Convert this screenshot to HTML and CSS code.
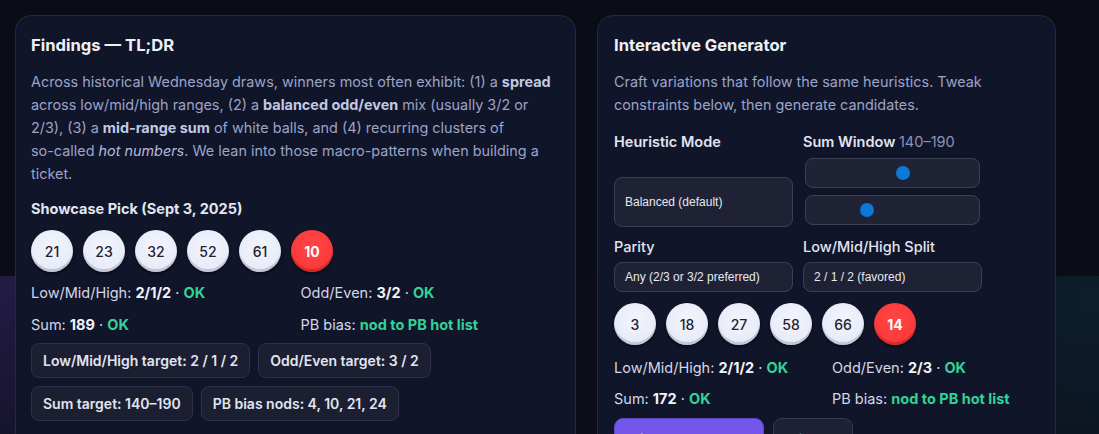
FILE: index.html
```html
<!DOCTYPE html>
<html lang="en">
<head>
<meta charset="utf-8">
<title>Findings & Generator</title>
<link rel="stylesheet" href="styles.css">
</head>
<body>
<main class="layout">
  <section class="card card-left">
    <h2 class="card-title">Findings — TL;DR</h2>
    <p class="lead">Across historical Wednesday draws, winners most often exhibit: (1) a <b>spread</b> across low/mid/high ranges, (2) a <b>balanced odd/even</b> mix (usually 3/2 or 2/3), (3) a <b>mid-range sum</b> of white balls, and (4) recurring clusters of <span class="nowrap">so-called</span> <i>hot numbers</i>. We lean into those macro-patterns when building a ticket.</p>
    <h3 class="sub">Showcase Pick (Sept 3, 2025)</h3>
    <div class="balls">
      <span class="ball">21</span>
      <span class="ball">23</span>
      <span class="ball">32</span>
      <span class="ball">52</span>
      <span class="ball">61</span>
      <span class="ball pb">10</span>
    </div>
    <div class="stats">
      <div>Low/Mid/High: <b>2/1/2</b> · <span class="ok">OK</span></div>
      <div>Odd/Even: <b>3/2</b> · <span class="ok">OK</span></div>
      <div>Sum: <b>189</b> · <span class="ok">OK</span></div>
      <div>PB bias: <span class="ok">nod to PB hot list</span></div>
    </div>
    <div class="chips">
      <span class="chip">Low/Mid/High target: 2 / 1 / 2</span>
      <span class="chip">Odd/Even target: 3 / 2</span>
      <span class="chip">Sum target: 140–190</span>
      <span class="chip">PB bias nods: 4, 10, 21, 24</span>
    </div>
  </section>

  <section class="card card-right">
    <h2 class="card-title">Interactive Generator</h2>
    <p class="lead">Craft variations that follow the same heuristics. Tweak constraints below, then generate candidates.</p>
    <div class="controls">
      <label class="field">
        <span class="field-label strong">Heuristic Mode</span>
        <span class="select tall">Balanced (default)</span>
      </label>
      <div class="field">
        <span class="field-label strong">Sum Window <span class="muted">140–190</span></span>
        <span class="range first"><span class="thumb" style="left:56%"></span></span>
        <span class="range second"><span class="thumb" style="left:35%"></span></span>
      </div>
      <label class="field row2">
        <span class="field-label">Parity</span>
        <span class="select">Any (2/3 or 3/2 preferred)</span>
      </label>
      <label class="field row2">
        <span class="field-label">Low/Mid/High Split</span>
        <span class="select">2 / 1 / 2 (favored)</span>
      </label>
    </div>
    <div class="balls balls-right">
      <span class="ball">3</span>
      <span class="ball">18</span>
      <span class="ball">27</span>
      <span class="ball">58</span>
      <span class="ball">66</span>
      <span class="ball pb">14</span>
    </div>
    <div class="stats stats-right">
      <div>Low/Mid/High: <b>2/1/2</b> · <span class="ok">OK</span></div>
      <div>Odd/Even: <b>2/3</b> · <span class="ok">OK</span></div>
      <div>Sum: <b>172</b> · <span class="ok">OK</span></div>
      <div>PB bias: <span class="ok">nod to PB hot list</span></div>
    </div>
    <div class="actions">
      <button class="btn btn-primary">🎲 Generate</button>
      <button class="btn btn-ghost">📋 Copy</button>
    </div>
  </section>
</main>
</body>
</html>
```

FILE: styles.css
```css
html, body {
  margin: 0;
  padding: 0;
}

body {
  width: 1099px;
  height: 434px;
  overflow: hidden;
  font-family: Inter, "Noto Sans", sans-serif;
  color: #e6e9f4;
  background:
    linear-gradient(#0a0c16, #0a0c16) 0 0 / 100% 276px no-repeat,
    radial-gradient(520px 380px at 0 276px, rgba(118, 80, 230, 0.22), rgba(118, 80, 230, 0) 75%),
    radial-gradient(520px 380px at 100% 300px, rgba(20, 150, 170, 0.12), rgba(20, 150, 170, 0) 75%),
    #0c0d19;
}

.layout {
  display: grid;
  grid-template-columns: 561px 459px;
  column-gap: 21px;
  padding: 15px 0 0 15px;
  align-items: start;
}

.card {
  background: #11152a;
  border: 1px solid #242941;
  border-radius: 16px;
  padding: 18px 15px 40px;
  min-height: 480px;
  box-sizing: border-box;
}

.card-right {
  padding-left: 16px;
}

.card-title {
  margin: 0;
  font-size: 16.6px;
  line-height: 22px;
  font-weight: 700;
  color: #eef0f8;
}

.lead {
  margin: 14px 0 0;
  font-size: 14.4px;
  line-height: 23px;
  color: #9ba3c7;
}

.nowrap {
  white-space: nowrap;
}

.lead b {
  font-weight: 700;
  color: #c3c9e2;
}

.lead i {
  color: #b3badb;
}

.sub {
  margin: 14px 0 0;
  font-size: 14.5px;
  line-height: 20px;
  font-weight: 700;
  color: #e2e6f2;
}

.balls {
  display: flex;
  gap: 10px;
  margin-top: 11px;
}

.ball {
  width: 42px;
  height: 42px;
  border-radius: 50%;
  display: flex;
  align-items: center;
  justify-content: center;
  font-size: 14px;
  font-weight: 500;
  color: #1f2230;
  background: radial-gradient(circle at 50% 38%, #f2f4fd 0%, #e9ecf8 65%, #d9dcea 100%);
  box-shadow: inset 0 -3px 0 rgba(40, 44, 70, 0.18), 0 2px 3px rgba(0, 0, 0, 0.45);
  box-sizing: border-box;
}

.ball.pb {
  background: radial-gradient(circle at 50% 38%, #ff4545 0%, #fb3a3a 70%, #e83232 100%);
  color: #ffffff;
  font-weight: 700;
  box-shadow: inset 0 -3px 0 rgba(120, 0, 0, 0.25), 0 2px 3px rgba(0, 0, 0, 0.45);
}

.stats {
  display: grid;
  grid-template-columns: 1fr 1fr;
  column-gap: 10px;
  row-gap: 11px;
  margin-top: 10px;
  font-size: 14.5px;
  line-height: 21px;
  color: #d3d8e8;
}

.stats b {
  font-weight: 700;
  color: #f1f3fa;
}

.ok {
  color: #33d296;
  font-weight: 700;
}

.chips {
  display: flex;
  flex-wrap: wrap;
  gap: 8px;
  margin-top: 8px;
  max-width: 420px;
}

.chip {
  display: inline-flex;
  align-items: center;
  height: 35px;
  padding: 0 11px;
  box-sizing: border-box;
  background: #1b1f31;
  border: 1px solid #2d3248;
  border-radius: 8px;
  font-size: 14px;
  font-weight: 600;
  color: #e1e5f0;
  white-space: nowrap;
}

.controls {
  display: grid;
  grid-template-columns: 179px 179px;
  column-gap: 10px;
  margin-top: 16px;
}

.field {
  display: flex;
  flex-direction: column;
}

.field-label {
  font-size: 14.5px;
  line-height: 20px;
  font-weight: 500;
  color: #e1e5f1;
}

.field-label.strong {
  font-weight: 600;
}

.muted {
  font-weight: 400;
  color: #8c94b6;
}

.select {
  display: flex;
  align-items: center;
  height: 30px;
  box-sizing: border-box;
  padding: 0 10px;
  background: #1e2234;
  border: 1px solid #3a3f54;
  border-radius: 8px;
  font-family: "Liberation Sans", Arial, sans-serif;
  font-size: 12px;
  color: #e6e8f2;
  margin-top: 5px;
}

.select.tall {
  height: 50px;
  margin-top: 25px;
}

.range {
  position: relative;
  display: block;
  width: 175px;
  height: 30px;
  margin: 2px;
  box-sizing: border-box;
  background: #1f2335;
  border: 1px solid #3c4156;
  border-radius: 8px;
}

.range.first {
  margin-top: 6px;
}

.range.second {
  margin-top: 5px;
}

.thumb {
  position: absolute;
  top: 50%;
  width: 14px;
  height: 14px;
  margin: -7px 0 0 -7px;
  border-radius: 50%;
  background: #0a79d8;
}

.row2 {
  margin-top: 10px;
}

.balls-right {
  margin-top: 11px;
}

.stats-right {
  margin-top: 12px;
  row-gap: 10px;
}

.actions {
  display: flex;
  gap: 9px;
  margin-top: 9px;
}

.btn {
  height: 44px;
  border-radius: 9px;
  font-family: Inter, "Noto Sans", sans-serif;
  font-size: 14px;
  font-weight: 700;
  padding: 0 0 0 18px;
  text-align: left;
  box-sizing: border-box;
  white-space: nowrap;
  overflow: hidden;
}

.btn-primary {
  width: 150px;
  background: #7456ea;
  border: 1px solid #5d45c2;
  color: #ffffff;
}

.btn-ghost {
  width: 80px;
  background: #1d2133;
  border: 1px solid #343950;
  color: #e1e5f0;
}
```
